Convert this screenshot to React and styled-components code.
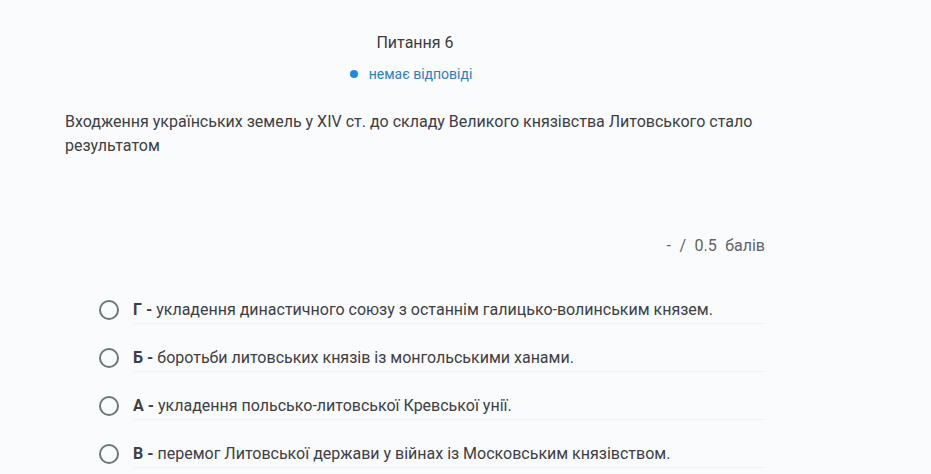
import React from "react";
import styled, { createGlobalStyle } from "styled-components";

const Global = createGlobalStyle`
  html, body { margin: 0; padding: 0; background: #fafbfd; }
  body { font-family: Roboto, "Noto Sans", sans-serif; color: #3c4043; }
`;

const Page = styled.div`
  width: 700px;
  margin-left: 65px;
  padding-top: 31px;
`;

const Title = styled.div`
  text-align: center;
  font-size: 16px;
  line-height: 24px;
  color: #3c3c3c;
`;

const Status = styled.div`
  display: flex;
  justify-content: center;
  align-items: center;
  gap: 11px;
  margin-top: 9px;
  padding-right: 8px;
  font-size: 14px;
  line-height: 20px;
  color: #2b80c5;
`;

const Dot = styled.span`
  width: 8px;
  height: 8px;
  border-radius: 50%;
  background: #1a8ae0;
`;

const Question = styled.p`
  margin: 26px 0 0;
  font-size: 16px;
  line-height: 24px;
  color: #3c4043;
`;

const Score = styled.div`
  margin-top: 76px;
  text-align: right;
  font-size: 16px;
  line-height: 24px;
  color: #5f6368;
  word-spacing: 4.5px;
`;

const Options = styled.div`
  margin-top: 40px;
  display: flex;
  flex-direction: column;
`;

const Option = styled.label`
  display: flex;
  align-items: flex-start;
  gap: 14px;
  padding-left: 34px;
  height: 48px;
`;

const Radio = styled.span`
  flex: none;
  width: 16px;
  height: 16px;
  border: 2px solid #6b7878;
  border-radius: 50%;
  margin-top: 2px;
`;

const OptionText = styled.div`
  flex: 1;
  font-size: 16px;
  line-height: 24px;
  color: #3c4043;
  padding-bottom: 1px;
  border-bottom: 1px solid #eef0f3;
  height: 24px;
`;

const Letter = styled.b`
  font-weight: 700;
`;

const options = [
  ["Г", "укладення династичного союзу з останнім галицько-волинським князем."],
  ["Б", "боротьби литовських князів із монгольськими ханами."],
  ["А", "укладення польсько-литовської Кревської унії."],
  ["В", "перемог Литовської держави у війнах із Московським князівством."],
];

export default function App() {
  return (
    <>
      <Global />
      <Page>
        <Title>Питання 6</Title>
        <Status>
          <Dot />
          немає відповіді
        </Status>
        <Question>
          Входження українських земель у XIV ст. до складу Великого князівства Литовського стало результатом
        </Question>
        <Score>-&nbsp;/&nbsp;0.5 балів</Score>
        <Options>
          {options.map(([l, t]) => (
            <Option key={l}>
              <Radio />
              <OptionText>
                <Letter>{l} - </Letter>
                {t}
              </OptionText>
            </Option>
          ))}
        </Options>
      </Page>
    </>
  );
}
